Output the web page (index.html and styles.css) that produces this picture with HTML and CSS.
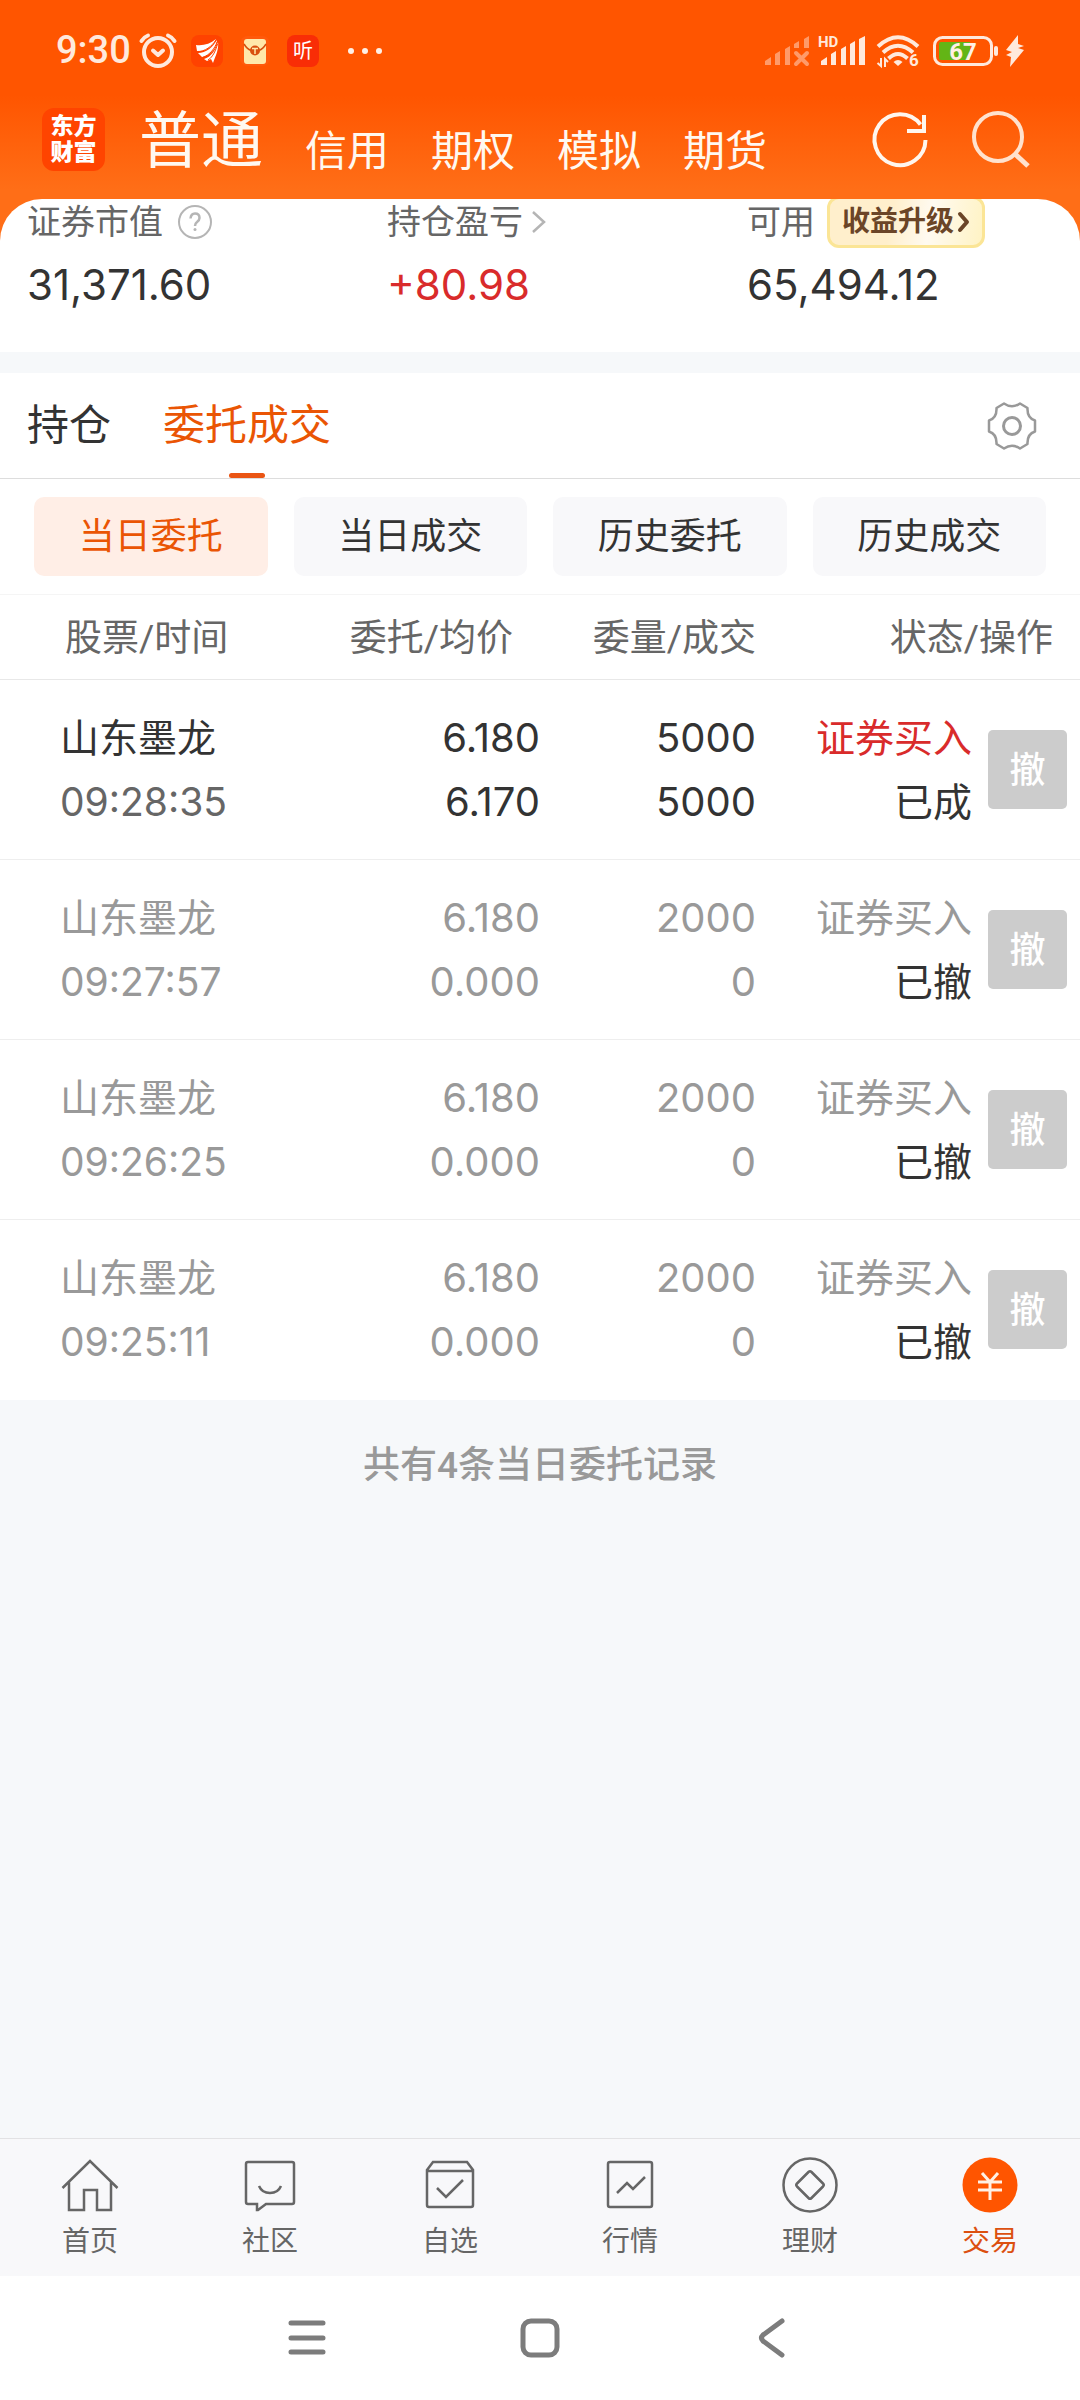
FILE: index.html
```html
<!DOCTYPE html>
<html lang="zh-CN">
<head>
  <meta charset="UTF-8">
  <meta name="viewport" content="width=device-width, initial-scale=1.0">
  <title>委托成交</title>
  <link rel="stylesheet" href="styles.css">
</head>
<body>
  <div class="app">
    <header class="header">
      <!-- Status bar -->
      <div class="status-bar">
        <div class="status-left">
          <span class="clock">9:30</span>
          <svg class="alarm" width="38" height="36" viewBox="0 0 38 36" fill="none" stroke="#ffe9dc" stroke-width="4" stroke-linecap="round" stroke-linejoin="round">
            <circle cx="19" cy="19" r="14"/>
            <path d="M2.500 8Q5 4 9 2.500M29 2.500Q33 4 35.500 8M14 17.500L19 22L24 17.500"/>
          </svg>
          <svg class="app-icon" width="32" height="32" viewBox="0 0 32 32">
            <rect width="32" height="32" rx="8" fill="#ff4200"/>
            <path d="M5 10C12 11 19 9 25 4C22 12 14 17 6 16Z" fill="#fff"/>
            <path d="M7 18C15 18 22 12 26 5C26 13 19 21 11 22Z" fill="#fff"/>
            <path d="M13 24C20 22 25 15 27 7C28 14 25 20 22 28L20 24L16 26Z" fill="#fff"/>
            <path d="M6 16.500C14 17 21 11 25 5M11.500 22.500C19 20 24 13 26 7M17 25C22 22 25 15 26.500 9" stroke="#ff4200" fill="none"/>
          </svg>
          <svg class="app-icon" width="32" height="32" viewBox="0 0 32 32">
            <rect x="1" y="1" width="30" height="30" rx="8" fill="#ff5a0c"/>
            <rect x="5" y="4" width="22" height="25" rx="3" fill="#ffe9ab"/>
            <path d="M5 9Q8 14 12 15.500M27 9Q24 14 20 15.500" stroke="#d4500f" stroke-width="1.500" fill="none"/>
            <circle cx="16" cy="15.500" r="5" fill="#d9500f"/>
            <path d="M13 13.500H19M16 13.500V19" stroke="#ffe9ab" stroke-width="1.500"/>
          </svg>
          <span class="listen">听</span>
          <svg class="dots" width="36" height="8" viewBox="0 0 36 8" fill="#fff0e6">
            <circle cx="4" cy="4" r="3"/><circle cx="18" cy="4" r="3"/><circle cx="32" cy="4" r="3"/>
          </svg>
        </div>
        <div class="status-right">
          <svg width="46" height="34" viewBox="0 0 46 34" fill="#ff9a69" stroke="none">
            <path d="M1 27L7 23V31H1ZM11 20L16 17V31H11ZM21 15L26 12V31H21ZM30 10L35 7V14H30ZM40 5L45 2V14H40Z"/>
            <path d="M32 19L43 30M43 19L32 30" stroke="#ff9a69" stroke-width="4" stroke-linecap="round"/>
          </svg>
          <svg class="signal" width="48" height="34" viewBox="0 0 48 34" fill="#ffe9dc">
            <text x="0" y="13" class="hd">HD</text>
            <path d="M3 27L9 23V31H3ZM13 20L18 17V31H13ZM23 15L28 12V31H23ZM32 10L37 7V31H32ZM41 5L47 2V31H41Z"/>
          </svg>
          <svg class="wifi" width="44" height="40" viewBox="0 -3 44 40" fill="none" stroke="#ffe9dc" stroke-width="4">
            <path d="M2 12.500Q22 -6 42 12.500M7 18.500Q22 5 37 18.500M12.500 24.500Q22 15.500 31.500 24.500"/>
            <path d="M17.500 28Q22 24 26.500 28L22 32Z" fill="#ffe9dc" stroke="none"/>
            <path d="M5 24V32L1.500 29M9 33V25L12 28" stroke-width="2"/>
            <text x="33" y="32" class="wifi-version">6</text>
          </svg>
          <svg class="battery" width="68" height="34" viewBox="0 0 68 34">
            <rect x="2.500" y="3.500" width="57" height="27" rx="8" fill="none" stroke="#ffe9dc" stroke-width="3"/>
            <path d="M9 8H38V26H9Q7 26 7 24V10Q7 8 9 8Z" fill="#63b516"/>
            <rect x="62" y="12" width="4" height="10" rx="2" fill="#ffe9dc"/>
            <text x="31" y="26" text-anchor="middle" class="percent">67</text>
          </svg>
          <svg class="bolt" width="18" height="34" viewBox="0 0 18 34" fill="#ffe9dc">
            <path d="M12 1L0 16L6 18L0 21L5 23L4 33L18 16L12 14L18 12L12 10Z"/>
          </svg>
        </div>
      </div>

      <!-- Account type tabs -->
      <div class="title-bar">
        <a class="logo" href="#">东方<br>财富</a>
        <nav class="account-tabs">
          <a class="active" href="#">普通</a>
          <a href="#">信用</a>
          <a href="#">期权</a>
          <a href="#">模拟</a>
          <a href="#">期货</a>
        </nav>
        <div class="tools">
          <button class="icon-button" aria-label="刷新">
            <svg width="60" height="60" viewBox="0 0 60 60" fill="none" stroke="#fff6ee" stroke-width="4">
              <path d="M55.500 31A25.500 25.500 0 1 1 50.500 15.500"/>
              <path d="M54 6V22H37"/>
            </svg>
          </button>
          <button class="icon-button" aria-label="搜索">
            <svg width="60" height="60" viewBox="0 0 60 60" fill="none" stroke="#ffe2ce" stroke-width="4">
              <circle cx="28" cy="28" r="24"/>
              <path d="M44 44L58 57" stroke-width="5"/>
            </svg>
          </button>
        </div>
      </div>
    </header>

    <main class="content">
      <section class="summary">
        <div class="summary-item">
          <div class="summary-label">
            证券市值
            <svg class="help" width="36" height="36" viewBox="0 0 36 36" fill="none" stroke="#b5b5b5" stroke-width="2">
              <circle cx="18" cy="18" r="16"/>
              <path d="M13.500 14.500Q14 9.500 18 9.500Q22.500 9.500 22.500 14Q22.500 16 20 18Q18 19.500 18 22" stroke-width="2.500"/>
              <circle cx="18" cy="25.500" r="1.500" fill="#b5b5b5" stroke="none"/>
            </svg>
          </div>
          <div class="summary-value">31,371.60</div>
        </div>
        <div class="summary-item">
          <div class="summary-label">
            持仓盈亏
            <svg class="more" width="16" height="24" viewBox="0 0 16 24" fill="none" stroke="#b5b5b5" stroke-width="2.500">
              <path d="M2 2L13 12L2 22"/>
            </svg>
          </div>
          <div class="summary-value red">+80.98</div>
        </div>
        <div class="summary-item">
          <div class="summary-label">
            可用
            <button class="upgrade">
              收益升级
              <svg width="12" height="22" viewBox="0 0 12 22" fill="none" stroke="#6b4527" stroke-width="4" stroke-linecap="round" stroke-linejoin="round">
                <path d="M2 3L9 11L2 19"/>
              </svg>
            </button>
          </div>
          <div class="summary-value">65,494.12</div>
        </div>
      </section>

      <nav class="tabs">
        <a class="tab" href="#">持仓</a>
        <a class="tab active" href="#">委托成交</a>
        <button class="icon-button settings" aria-label="设置">
          <svg width="52" height="52" viewBox="0 0 52 52" fill="none" stroke="#999" stroke-width="2.500" stroke-linejoin="round">
            <path d="M18 3.500Q26 9 34 3.500L41.500 8Q41 18 49 20.500V31.500Q41 34 41.500 44L34 48.500Q26 43 18 48.500L10.500 44Q11 34 3 31.500V20.500Q11 18 10.500 8Z"/>
            <circle cx="26" cy="26" r="8.500" stroke-width="3"/>
          </svg>
        </button>
      </nav>

      <div class="filters">
        <button class="filter active">当日委托</button>
        <button class="filter">当日成交</button>
        <button class="filter">历史委托</button>
        <button class="filter">历史成交</button>
      </div>

      <table class="orders">
        <colgroup>
          <col class="col-stock">
          <col class="col-price">
          <col class="col-amount">
          <col class="col-status">
          <col class="col-action">
        </colgroup>
        <thead>
          <tr>
            <th class="stock-head">股票/时间</th>
            <th class="inset">委托/均价</th>
            <th>委量/成交</th>
            <th class="inset" colspan="2">状态/操作</th>
          </tr>
        </thead>
        <tbody>
          <tr>
            <td class="stock">山东墨龙<br><span class="time">09:28:35</span></td>
            <td>6.180<br>6.170</td>
            <td>5000<br>5000</td>
            <td class="status"><span class="red">证券买入</span><br>已成</td>
            <td class="action"><button class="cancel">撤</button></td>
          </tr>
          <tr class="cancelled">
            <td class="stock">山东墨龙<br><span class="time">09:27:57</span></td>
            <td>6.180<br>0.000</td>
            <td>2000<br>0</td>
            <td class="status">证券买入<br><span class="state">已撤</span></td>
            <td class="action"><button class="cancel">撤</button></td>
          </tr>
          <tr class="cancelled">
            <td class="stock">山东墨龙<br><span class="time">09:26:25</span></td>
            <td>6.180<br>0.000</td>
            <td>2000<br>0</td>
            <td class="status">证券买入<br><span class="state">已撤</span></td>
            <td class="action"><button class="cancel">撤</button></td>
          </tr>
          <tr class="cancelled">
            <td class="stock">山东墨龙<br><span class="time">09:25:11</span></td>
            <td>6.180<br>0.000</td>
            <td>2000<br>0</td>
            <td class="status">证券买入<br><span class="state">已撤</span></td>
            <td class="action"><button class="cancel">撤</button></td>
          </tr>
        </tbody>
      </table>

      <p class="total">共有4条当日委托记录</p>
    </main>

    <!-- Bottom tab bar -->
    <nav class="tab-bar">
      <a href="#">
        <svg width="60" height="60" viewBox="0 0 60 60">
          <path d="M2.500 32L30 5L57.500 32M9 26V54H24V34H37V54H51V26"/>
        </svg>
        首页
      </a>
      <a href="#">
        <svg width="60" height="60" viewBox="0 0 60 60">
          <path d="M8 6H52Q54 6 54 8V46Q54 48 52 48H26L18 54H17V48H8Q6 48 6 46V8Q6 6 8 6Z"/>
          <path d="M19 30Q22 37 30 37Q38 37 41 30"/>
        </svg>
        社区
      </a>
      <a href="#">
        <svg width="60" height="60" viewBox="0 0 60 60">
          <path d="M7 14L13 6H47L53 14V49Q53 51 51 51H9Q7 51 7 49ZM7 15H53"/>
          <path d="M17 32L26 41L43 24"/>
        </svg>
        自选
      </a>
      <a href="#">
        <svg width="60" height="60" viewBox="0 0 60 60">
          <rect x="8" y="6" width="44" height="45" rx="2"/>
          <path d="M17 37L27 27L33 33L45 21"/>
        </svg>
        行情
      </a>
      <a href="#">
        <svg width="60" height="60" viewBox="0 0 60 60">
          <circle cx="30" cy="29" r="26.500"/>
          <path d="M28.500 16Q30 14.500 31.500 16L43 27.500Q44.500 29 43 30.500L31.500 42Q30 43.500 28.500 42L17 30.500Q15.500 29 17 27.500Z"/>
        </svg>
        理财
      </a>
      <a class="active" href="#">
        <svg width="60" height="60" viewBox="0 0 60 60">
          <circle class="coin" cx="30" cy="29" r="27.500"/>
          <path class="yen" d="M22 17L30 26L38 17M18 26H42M18 34H42M30 26V44"/>
        </svg>
        交易
      </a>
    </nav>

    <!-- System navigation -->
    <div class="system-nav">
      <button class="icon-button" aria-label="菜单">
        <svg width="48" height="48" viewBox="0 0 48 48">
          <path d="M8 9H40M8 24H40M8 38H40"/>
        </svg>
      </button>
      <button class="icon-button" aria-label="主页">
        <svg width="48" height="48" viewBox="0 0 48 48">
          <rect x="7" y="7" width="34" height="34" rx="8"/>
        </svg>
      </button>
      <button class="icon-button" aria-label="返回">
        <svg width="48" height="48" viewBox="0 0 48 48">
          <path d="M33 7L14 21Q11 24 14 27L33 41"/>
        </svg>
      </button>
    </div>
  </div>
</body>
</html>
```

FILE: styles.css
```css
* {
  box-sizing: border-box;
}

body {
  margin: 0;
  font-family: Roboto, "Noto Sans CJK SC", sans-serif;
  line-height: 1.2;
  color: #333;
  background: #f6f8fa;
}

a {
  color: inherit;
  text-decoration: none;
}

button {
  padding: 0;
  border: none;
  background: none;
  font-family: inherit;
  line-height: inherit;
  color: inherit;
  cursor: pointer;
}

svg {
  display: block;
  flex: none;
  overflow: visible;
}

.app {
  min-height: 100vh;
  display: flex;
  flex-direction: column;
}

.red {
  color: #d92b2b;
}

.icon-button {
  display: flex;
}

/* Header */
.header {
  height: 242px;
  margin-bottom: -43px;
  background: linear-gradient(#ff5500 95px, #ff6e17 190px);
}

.status-bar {
  display: flex;
  justify-content: space-between;
  padding: 34px 56px 0;
}

.status-left,
.status-right {
  display: flex;
  align-items: center;
  height: 34px;
}

.clock {
  width: 83px;
  font-size: 38px;
  font-weight: 500;
  color: #ffe9dc;
}

.app-icon {
  margin-left: 16px;
}

.alarm + .app-icon {
  margin-left: 14px;
}

.listen {
  width: 32px;
  height: 32px;
  margin-left: 16px;
  border-radius: 8px;
  background: #f92d06;
  color: #fff;
  font-size: 20px;
  line-height: 32px;
  text-align: center;
}

.dots {
  margin-left: 28px;
}

.signal {
  margin-left: 8px;
}

.hd {
  font-size: 15px;
  font-weight: 700;
}

.wifi {
  margin-left: 10px;
}

.wifi-version {
  font-size: 17px;
  font-weight: 700;
  fill: #ffe9dc;
  stroke: none;
}

.battery {
  margin-left: 12px;
}

.percent {
  font-size: 24px;
  font-weight: 700;
  fill: #fff0e6;
}

.bolt {
  margin-left: 6px;
}

.title-bar {
  display: flex;
  align-items: center;
  padding: 35px 50px 0 42px;
}

.logo {
  width: 63px;
  height: 63px;
  padding-top: 6px;
  border-radius: 12px;
  background: #ff4400;
  color: #fff;
  font-size: 23px;
  font-weight: 900;
  line-height: 26px;
  text-align: center;
}

.account-tabs {
  flex: 1;
  display: flex;
  align-items: flex-end;
  gap: 42px;
  margin-left: 34px;
  padding-top: 6px;
  font-size: 42px;
  line-height: 46px;
  color: #fff8f0;
}

.account-tabs .active {
  font-size: 62px;
  line-height: 66px;
}

.tools {
  display: flex;
  gap: 40px;
}

/* Account summary */
.content {
  flex: 1;
}

.summary {
  display: grid;
  grid-template-columns: repeat(3, 1fr);
  padding-bottom: 41px;
  border-radius: 42px 42px 0 0;
  background: #fff;
  overflow: hidden;
}

.summary-item {
  padding-left: 27px;
}

.summary-label {
  display: flex;
  align-items: center;
  height: 46px;
  margin-bottom: 14px;
  font-size: 34px;
  color: #666;
}

.help {
  margin-left: 14px;
}

.more {
  margin-left: 8px;
}

.summary-value {
  font-family: Inter, "Noto Sans CJK SC", sans-serif;
  font-size: 42px;
  line-height: 52px;
}

.upgrade {
  flex: none;
  display: flex;
  align-items: center;
  gap: 4px;
  height: 52px;
  margin-left: 12px;
  padding: 0 12px;
  border: 3px solid #fbe596;
  border-radius: 12px;
  background: linear-gradient(100deg, #ffefcc 40%, #fffaf0 65%, #fff3c4);
  color: #6b4527;
  font-size: 28px;
  font-weight: 700;
}

/* Tabs */
.tabs {
  display: flex;
  align-items: center;
  gap: 52px;
  height: 106px;
  margin-top: 21px;
  padding: 0 42px 0 27px;
  border-bottom: 1px solid #ddd;
  background: #fff;
}

.tab {
  position: relative;
  font-size: 42px;
  line-height: 105px;
}

.tab.active {
  color: #ea5504;
}

.tab.active::after {
  content: "";
  position: absolute;
  left: 50%;
  bottom: 0;
  width: 36px;
  height: 5px;
  margin-left: -18px;
  border-radius: 3px;
  background: #ea5514;
}

.settings {
  margin-left: auto;
}

.filters {
  display: grid;
  grid-template-columns: repeat(4, 1fr);
  gap: 26px;
  padding: 18px 34px;
  background: #fff;
}

.filter {
  height: 79px;
  padding-top: 2px;
  border-radius: 10px;
  background: #f8f8fa;
  font-size: 36px;
}

.filter.active {
  background: #ffeee6;
  color: #ea5504;
}

/* Orders table */
.orders {
  width: 100%;
  table-layout: fixed;
  border-spacing: 0;
  background: #fff;
  text-align: right;
}

.col-stock {
  width: 28%;
}

.col-price {
  width: 22%;
}

.col-amount,
.col-status {
  width: 20%;
}

.col-action {
  width: 10%;
}

.orders th {
  height: 86px;
  padding: 4px 0 0;
  border-top: 1px solid #f5f5f5;
  border-bottom: 1px solid #e8e8e8;
  color: #666;
  font-size: 37px;
  font-weight: 400;
}

.orders .stock-head {
  padding-left: 65px;
  text-align: left;
}

.orders .inset {
  padding-right: 27px;
}

.orders td {
  height: 180px;
  padding: 0;
  border-bottom: 1px solid #eee;
  font-family: Inter, "Noto Sans CJK SC", sans-serif;
  font-size: 40px;
  line-height: 64px;
}

.orders tr:last-child td {
  border-bottom-color: #fff;
}

.orders .stock {
  padding-left: 60px;
  font-size: 39px;
  text-align: left;
}

.time {
  color: #666;
}

.orders .status {
  font-size: 39px;
}

.cancelled,
.cancelled .time {
  color: #999;
}

.cancelled .state {
  color: #333;
}

.action .cancel {
  width: 79px;
  height: 79px;
  margin-right: 13px;
  border-radius: 5px;
  background: #ccc;
  color: #fff;
  font-size: 36px;
  font-weight: 500;
  vertical-align: middle;
}

.total {
  margin: 38px 0;
  color: #999;
  font-size: 37px;
  font-weight: 500;
  line-height: 56px;
  text-align: center;
}

/* Bottom tab bar */
.tab-bar {
  display: grid;
  grid-template-columns: repeat(6, 1fr);
  padding: 17px 0 16px;
  border-top: 1px solid #e2e2e4;
  background: #f8f8fa;
}

.tab-bar a {
  display: flex;
  flex-direction: column;
  align-items: center;
  gap: 8px;
  color: #666;
  font-size: 28px;
  line-height: 36px;
}

.tab-bar svg {
  fill: none;
  stroke: #666;
  stroke-width: 2.5;
}

.tab-bar .active {
  color: #dc5010;
}

.tab-bar .coin {
  fill: #ff5500;
  stroke: none;
}

.tab-bar .yen {
  stroke: #fff0e4;
  stroke-width: 3;
}

.system-nav {
  display: flex;
  justify-content: center;
  align-items: center;
  gap: 185px;
  height: 124px;
  background: #fff;
}

.system-nav svg {
  fill: none;
  stroke: #7c7c7c;
  stroke-width: 5;
  stroke-linecap: round;
}
```
